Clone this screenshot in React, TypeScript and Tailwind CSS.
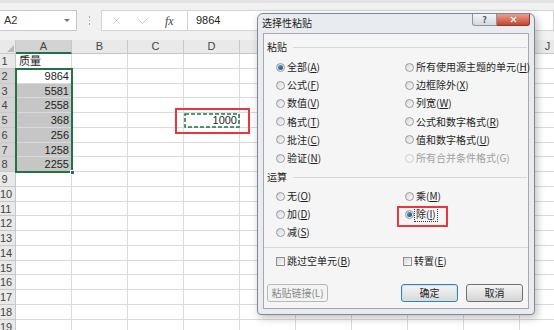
import { Check, X } from "lucide-react";

const COLS = ["A", "B", "C", "D", "E", "F", "G", "H", "I", "J"];
const ROWS = Array.from({ length: 19 }, (_, i) => i + 1);
const valuesA: Record<number, string> = {
  2: "9864",
  3: "5581",
  4: "2558",
  5: "368",
  6: "256",
  7: "1258",
  8: "2255",
};

type Opt = { text: string; key?: string; checked?: boolean; disabled?: boolean; focus?: boolean };

const pasteOptions: [Opt, Opt][] = [
  [{ text: "全部", key: "A", checked: true }, { text: "所有使用源主题的单元", key: "H" }],
  [{ text: "公式", key: "F" }, { text: "边框除外", key: "X" }],
  [{ text: "数值", key: "V" }, { text: "列宽", key: "W" }],
  [{ text: "格式", key: "T" }, { text: "公式和数字格式", key: "R" }],
  [{ text: "批注", key: "C" }, { text: "值和数字格式", key: "U" }],
  [{ text: "验证", key: "N" }, { text: "所有合并条件格式(G)", disabled: true }],
];

const opOptions: [Opt, Opt | null][] = [
  [{ text: "无", key: "O" }, { text: "乘", key: "M" }],
  [{ text: "加", key: "D" }, { text: "除", key: "I", checked: true, focus: true }],
  [{ text: "减", key: "S" }, null],
];

function Radio({ checked, disabled }: { checked?: boolean; disabled?: boolean }) {
  return (
    <span
      className={`flex h-[9px] w-[9px] shrink-0 items-center justify-center rounded-full border ${
        disabled
          ? "border-[#cfcfcf] bg-[#f4f4f4]"
          : "border-[#979a9e] bg-gradient-to-br from-[#d6d8db] to-[#fbfbfb]"
      }`}
    >
      {checked && <span className="h-[5px] w-[5px] rounded-full bg-gradient-to-br from-[#5f9bd6] to-[#1a4a80]" />}
    </span>
  );
}

function Label({ opt }: { opt: Opt }) {
  const body = opt.key ? (
    <>
      {opt.text}(<u>{opt.key}</u>)
    </>
  ) : (
    opt.text
  );
  return (
    <span
      className={`whitespace-nowrap text-[10px] leading-[12px] ${opt.disabled ? "text-[#a0a0a0]" : "text-[#1e1e1e]"} ${
        opt.focus ? "outline outline-1 outline-dotted outline-[#333] outline-offset-[1px]" : ""
      }`}
    >
      {body}
    </span>
  );
}

function Option({ opt }: { opt: Opt }) {
  return (
    <div className="flex items-center gap-[2px]">
      <Radio checked={opt.checked} disabled={opt.disabled} />
      <Label opt={opt} />
    </div>
  );
}

function SectionTitle({ title, className }: { title: string; className: string }) {
  return (
    <div className={`flex items-center pl-[3px] pr-[1px] ${className}`}>
      <span className="text-[10px] leading-[12px] text-[#1e1e1e]">{title}</span>
      <span className="ml-[6px] h-px flex-1 bg-[#d6d9dc]" />
    </div>
  );
}

function Checkbox({ text, k }: { text: string; k: string }) {
  return (
    <div className="flex items-center gap-[2px]">
      <span className="h-[9px] w-[9px] shrink-0 border border-[#8e8f8f] bg-gradient-to-br from-[#d9d9d9] to-[#f9f9f9]" />
      <span className="whitespace-nowrap text-[10px] leading-[12px] text-[#1e1e1e]">
        {text}(<u>{k}</u>)
      </span>
    </div>
  );
}

function FormulaBar() {
  return (
    <div className="flex h-[40px] flex-col bg-[#f1f1f1]">
      <div className="h-[3px] bg-[#e2e2e2]" />
      <div className="mt-[7px] flex h-[21px] items-stretch">
        <div className="flex w-[77px] items-center justify-between border border-l-0 border-[#c6c6c6] bg-white pl-[4px] pr-[6px]">
          <span className="text-[11px] text-[#333]">A2</span>
          <span className="h-0 w-0 border-x-[3px] border-t-[3px] border-x-transparent border-t-[#777]" />
        </div>
        <div className="ml-[11px] flex w-[3px] flex-col items-center justify-center gap-[2px]">
          <span className="h-[1.5px] w-[1.5px] bg-[#aaa]" />
          <span className="h-[1.5px] w-[1.5px] bg-[#aaa]" />
          <span className="h-[1.5px] w-[1.5px] bg-[#aaa]" />
        </div>
        <div className="ml-[10px] flex w-[87px] items-center border border-[#d4d4d4] bg-white pl-[9px]">
          <X size={11} strokeWidth={1.4} color="#b0b0b0" />
          <Check size={12} strokeWidth={1.4} color="#b0b0b0" className="ml-[16px]" />
          <span className="ml-[15px] font-['Liberation_Serif',serif] text-[12px] italic text-[#444]">fx</span>
        </div>
        <div className="flex flex-1 items-center border border-l-0 border-[#d4d4d4] bg-white pl-[8px]">
          <span className="text-[11px] text-[#222]">9864</span>
        </div>
      </div>
    </div>
  );
}

function Sheet() {
  return (
    <div className="flex flex-col">
      <div className="flex h-[14px]">
        <div className="relative w-[16px] shrink-0 border-b border-r border-[#c8c8c8] bg-[#e9e9e9]">
          <svg className="absolute bottom-[1px] right-[1px]" width="7" height="7" viewBox="0 0 7 7">
            <polygon points="7,0 7,7 0,7" fill="#b9b9b9" />
          </svg>
        </div>
        {COLS.map((c) => (
          <div
            key={c}
            className={`w-[56px] shrink-0 border-r border-[#c8c8c8] text-center text-[11px] leading-[13px] text-[#444] ${
              c === "A" ? "border-b-2 border-b-[#217346] bg-[#d3d3d3]" : "border-b bg-[#e9e9e9]"
            }`}
          >
            {c}
          </div>
        ))}
      </div>
      {ROWS.map((r) => {
        const inSel = r >= 2 && r <= 8;
        return (
          <div key={r} className="flex h-[14.75px]">
            <div
              className={`w-[16px] shrink-0 border-b border-r border-[#c8c8c8] pr-[6px] text-center text-[11px] leading-[14px] text-[#444] ${
                inSel ? "bg-[#d3d3d3]" : "bg-[#e9e9e9]"
              }`}
            >
              <span className="whitespace-nowrap">{r}</span>
            </div>
            {COLS.map((c) => {
              let content = "";
              let cls = "";
              if (c === "A" && r === 1) content = "质量";
              if (c === "A" && valuesA[r]) {
                content = valuesA[r];
                cls = "text-right pr-[2px]";
              }
              if (c === "D" && r === 5) {
                content = "1000";
                cls = "text-right pr-[2px]";
              }
              const fill = c === "A" && r >= 3 && r <= 8 ? "bg-[#c6c6c6]" : "bg-white";
              return (
                <div
                  key={c}
                  className={`w-[56px] shrink-0 border-b border-r border-[#dadada] pl-[3px] text-[11px] leading-[14px] text-[#1e1e1e] ${fill} ${cls}`}
                >
                  {content}
                </div>
              );
            })}
          </div>
        );
      })}
    </div>
  );
}

function Button({ children, variant }: { children: React.ReactNode; variant: "disabled" | "default" | "normal" }) {
  const styles = {
    disabled: "w-[61px] border-[#b5b9bc] bg-[#f3f3f3] text-[#8a8a8a]",
    default: "w-[57px] border-[#3c7fb1] bg-gradient-to-b from-[#f5f5f5] to-[#d9d9d9] text-[#1e1e1e] shadow-[inset_0_0_0_1px_#c4e5f6]",
    normal: "w-[57px] border-[#707070] bg-gradient-to-b from-[#f5f5f5] to-[#d5d5d5] text-[#1e1e1e]",
  };
  return (
    <div
      className={`flex h-[18px] items-center justify-center rounded-[3px] border text-[10px] leading-[12px] ${styles[variant]}`}
    >
      {children}
    </div>
  );
}

function PasteSpecialDialog() {
  return (
    <div className="absolute left-[257px] top-[13px] flex h-[302px] w-[278px] flex-col rounded-t-[6px] rounded-b-[4px] border border-[#7f8893] bg-[#e8ebef] font-['Noto_Sans_CJK_SC',sans-serif] shadow-[2px_3px_8px_rgba(0,0,0,0.25)]">
      <div className="flex h-[19px] items-start justify-between pl-[4px] pr-[4px]">
        <span className="mt-[3px] text-[10px] leading-[12px] text-[#222]">选择性粘贴</span>
        <div className="flex">
          <div className="flex h-[12px] w-[25px] items-center justify-center rounded-bl-[3px] border border-t-0 border-[#8c96a2] bg-gradient-to-b from-[#f4f6f8] to-[#d3d9e0] text-[9px] font-bold leading-none text-[#4a5866]">
            ?
          </div>
          <div className="flex h-[12px] w-[33px] items-center justify-center rounded-br-[3px] border border-l-0 border-t-0 border-[#8b3a30] bg-gradient-to-b from-[#e8a08e] to-[#c4412b]">
            <X size={9} strokeWidth={3} color="#ffffff" />
          </div>
        </div>
      </div>
      <div className="mx-[5px] mb-[5px] flex flex-1 flex-col border border-[#a3a9b0] bg-[#f5f5f5]">
        <SectionTitle title="粘贴" className="h-[24px] pt-[2px]" />
        <div className="grid grid-cols-[129px_1fr] pl-[12px]">
          {pasteOptions.map(([a, b], i) => (
            <div key={i} className="contents">
              <div className="flex h-[18.2px] items-center">
                <Option opt={a} />
              </div>
              <div className="flex h-[18.2px] items-center">
                <Option opt={b} />
              </div>
            </div>
          ))}
        </div>
        <SectionTitle title="运算" className="h-[20px]" />
        <div className="grid grid-cols-[129px_1fr] pl-[12px]">
          {opOptions.map(([a, b], i) => (
            <div key={i} className="contents">
              <div className="flex h-[18px] items-center">
                <Option opt={a} />
              </div>
              <div className="flex h-[18px] items-center">{b && <Option opt={b} />}</div>
            </div>
          ))}
        </div>
        <div className="mt-[6px] h-px bg-[#d6d9dc]" />
        <div className="mt-[4px] grid h-[18px] grid-cols-[127px_1fr] items-center pl-[12px]">
          <Checkbox text="跳过空单元" k="B" />
          <Checkbox text="转置" k="E" />
        </div>
        <div className="mt-[14px] flex justify-between pl-[3px] pr-[5px]">
          <Button variant="disabled">粘贴链接(L)</Button>
          <div className="flex gap-[8px]">
            <Button variant="default">确定</Button>
            <Button variant="normal">取消</Button>
          </div>
        </div>
      </div>
    </div>
  );
}

export default function App() {
  return (
    <div className="relative h-[330px] w-[554px] overflow-hidden bg-white font-['Liberation_Sans','Noto_Sans_CJK_SC',sans-serif] text-[#222]">
      <FormulaBar />
      <Sheet />
      {/* selection A2:A8 */}
      <div className="absolute left-[15px] top-[67.75px] h-[105.25px] w-[58px] border-2 border-[#217346]" />
      <div className="absolute left-[70px] top-[170px] h-[5px] w-[5px] border border-white bg-[#217346]" />
      {/* copied cell D5 */}
      <svg className="absolute left-[184px] top-[113px]" width="56" height="15" viewBox="0 0 56 15">
        <rect x="1" y="1" width="54" height="13" fill="none" stroke="#217346" strokeWidth="1.5" strokeDasharray="4 2" />
      </svg>
      <div className="absolute left-[175px] top-[108px] h-[26px] w-[75px] border-2 border-[#e8383d]" />
      <PasteSpecialDialog />
      <div className="absolute left-[397px] top-[206px] h-[21px] w-[51px] border-2 border-[#e8383d]" />
    </div>
  );
}
